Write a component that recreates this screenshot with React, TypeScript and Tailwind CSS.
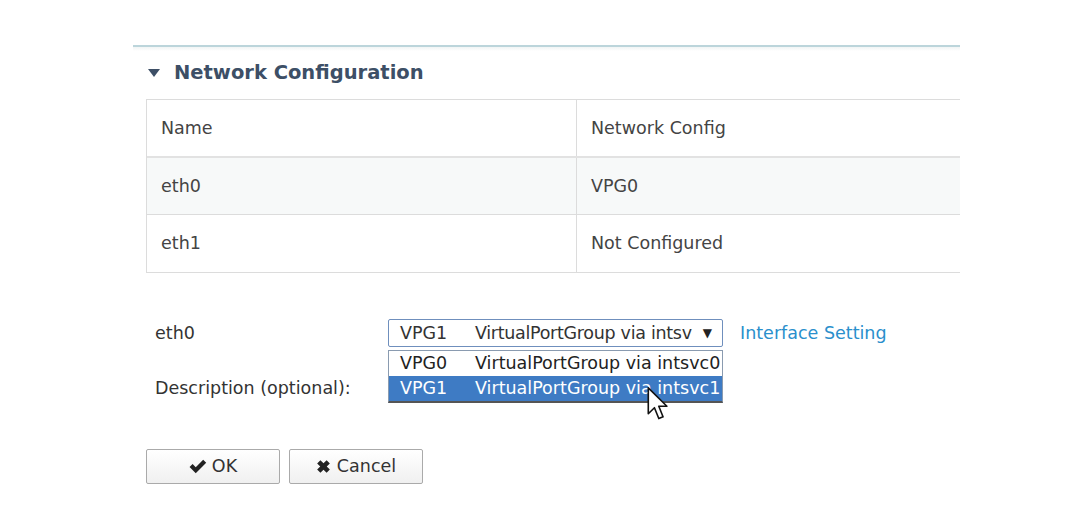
import React from 'react';

const rows = [
  { name: 'eth0', config: 'VPG0', shade: true },
  { name: 'eth1', config: 'Not Configured', shade: false },
];

const options = [
  { id: 'VPG0', label: 'VirtualPortGroup via intsvc0', selected: false },
  { id: 'VPG1', label: 'VirtualPortGroup via intsvc1', selected: true },
];

function Cursor() {
  return (
    <svg width="24" height="34" viewBox="0 0 13 21" className="absolute left-[257px] top-[36px]">
      <path d="M0.5 0.5 L0.5 16.5 L4.3 12.8 L7 19.5 L9.6 18.4 L7 11.9 L12 11.9 Z" fill="#fff" stroke="#111" strokeWidth="1" strokeLinejoin="round" />
    </svg>
  );
}

export default function App() {
  return (
    <div className="w-[1077px] h-[526px] bg-white text-[#444] font-['DejaVu_Sans',sans-serif] overflow-hidden">
      <div className="ml-[133px] mt-[45px] w-[827px]">
        <div className="h-[6px] border-t-2 border-[#bcd5db] bg-gradient-to-b from-[#f1f5f5] to-white" />

        <div className="flex items-center h-[42px] mt-[1px] pl-[15px]">
          <svg width="12" height="9" viewBox="0 0 12 9" className="mr-[14px]">
            <path d="M0 0 L12 0 L6 8 Z" fill="#3d4f66" />
          </svg>
          <span className="text-[19.5px] font-bold text-[#3d4f66]">Network Configuration</span>
        </div>

        <div className="ml-[13px] mt-[5px] border-l border-t border-b border-[#dcdcdc] text-[17.5px]">
          <div className="flex h-[58px] border-b-2 border-[#e2e2e2]">
            <div className="w-[430px] flex items-center pl-[14px] border-r border-[#dcdcdc]">Name</div>
            <div className="flex-1 flex items-center pl-[14px]">Network Config</div>
          </div>
          {rows.map((r, i) => (
            <div
              key={r.name}
              className={`flex h-[57px] ${r.shade ? 'bg-[#f7f9f9]' : 'bg-white'} ${i < rows.length - 1 ? 'border-b border-[#dcdcdc]' : ''}`}
            >
              <div className="w-[430px] flex items-center pl-[14px] border-r border-[#dcdcdc]">{r.name}</div>
              <div className="flex-1 flex items-center pl-[14px]">{r.config}</div>
            </div>
          ))}
        </div>

        <div className="mt-[46px] ml-[22px] text-[17.5px] text-[#333]">
          <div className="flex items-center h-[28px]">
            <div className="w-[233px]">eth0</div>
            <div className="relative">
              <div className="w-[335px] h-[28px] border border-[#6f8fbd] rounded-[2px] flex items-center pl-[11px] pr-[10px] bg-white">
                <span className="w-[75px] shrink-0">VPG1</span>
                <span className="flex-1 whitespace-nowrap tracking-[-0.3px]">VirtualPortGroup via intsv</span>
                <span className="text-[12px] ml-[4px] text-[#222]">▼</span>
              </div>
              <div className="absolute left-0 top-[31px] w-[335px] border border-[#8a9bb0] border-b-2 border-b-[#555] bg-white">
                {options.map((o) => (
                  <div
                    key={o.id}
                    className={`flex items-center h-[25px] pl-[11px] whitespace-nowrap ${o.selected ? 'bg-[#3e7bc4] text-white' : 'text-[#222]'}`}
                  >
                    <span className="w-[75px] shrink-0">{o.id}</span>
                    <span>{o.label}</span>
                  </div>
                ))}
                <Cursor />
              </div>
            </div>
            <a className="ml-[17px] text-[#2a8fcc]">Interface Setting</a>
          </div>
          <div className="flex items-center h-[28px] mt-[27px]">
            <div className="w-[233px]">Description (optional):</div>
          </div>
        </div>

        <div className="flex gap-[9px] ml-[13px] mt-[47px] text-[17.5px]">
          <button className="w-[134px] h-[35px] border border-[#aaa] rounded-[2px] bg-gradient-to-b from-white to-[#f0f0f0] flex items-center justify-center gap-[5px] text-[#333]">
            <svg width="18" height="15" viewBox="0 0 16 13">
              <path d="M0.5 7 L3.2 4.3 L6 7.1 L12.6 0.5 L15.3 3.2 L6 12.5 Z" fill="#222" />
            </svg>
            OK
          </button>
          <button className="w-[134px] h-[35px] border border-[#aaa] rounded-[2px] bg-gradient-to-b from-white to-[#f0f0f0] flex items-center justify-center gap-[6px] text-[#333]">
            <svg width="15" height="15" viewBox="0 0 13 13">
              <path d="M1 3.8 L3.8 1 L6.5 3.7 L9.2 1 L12 3.8 L9.3 6.5 L12 9.2 L9.2 12 L6.5 9.3 L3.8 12 L1 9.2 L3.7 6.5 Z" fill="#222" />
            </svg>
            Cancel
          </button>
        </div>
      </div>
    </div>
  );
}
